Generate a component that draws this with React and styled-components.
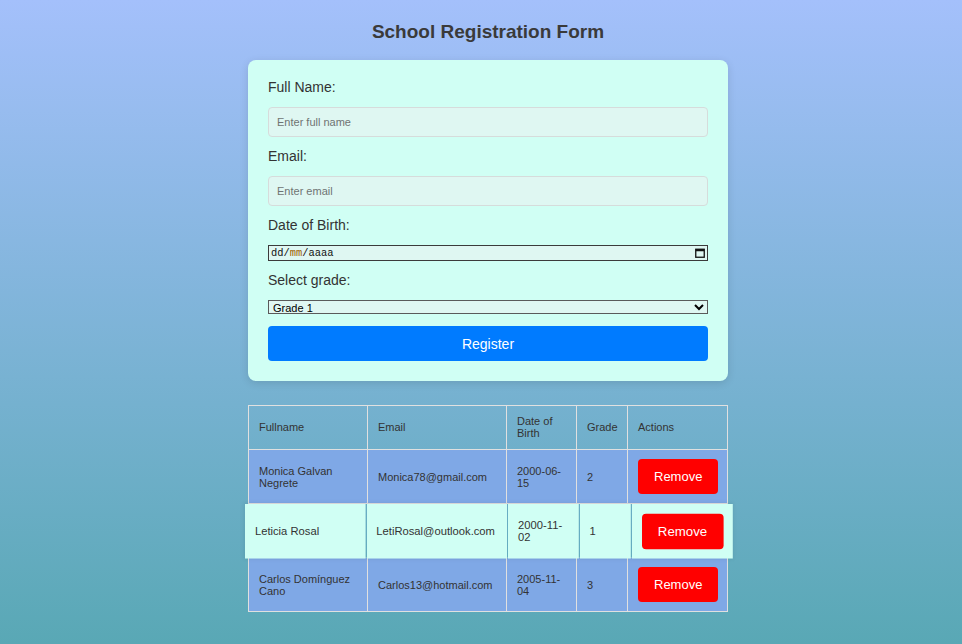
import React from "react";
import styled, { createGlobalStyle } from "styled-components";

const GlobalStyle = createGlobalStyle`
  html, body {
    margin: 0;
    padding: 0;
  }
  body {
    font-family: "Liberation Sans", Arial, sans-serif;
    color: #333;
  }
`;

const Page = styled.div`
  min-height: 100vh;
  box-sizing: border-box;
  background: linear-gradient(to bottom, #a4c0fb, #59a8b5);
  display: flex;
  flex-flow: column nowrap;
  align-items: center;
  padding: 20px 0 20px 14px;
`;

const Title = styled.h2`
  margin: 0 0 16px;
  font-size: 19px;
  line-height: 24px;
  font-weight: bold;
  color: #3a3a3a;
`;

const FormBox = styled.form`
  width: 480px;
  box-sizing: border-box;
  padding: 19px 20px 20px;
  background: #d0fff4;
  border-radius: 8px;
  box-shadow: 0 2px 8px rgba(0, 0, 0, 0.12);
  display: flex;
  flex-flow: column nowrap;
`;

const Label = styled.label`
  display: block;
  font-size: 14px;
  line-height: 17px;
  color: #333;
  margin-bottom: 11px;
`;

const TextInput = styled.input`
  height: 30px;
  box-sizing: border-box;
  padding: 0 8px;
  margin-bottom: 11px;
  border: 1px solid #d6dcdb;
  border-radius: 4px;
  background: #dff7f2;
  font-family: "Liberation Sans", Arial, sans-serif;
  font-size: 11px;
  color: #333;
  outline: none;

  &::placeholder {
    color: #6f7472;
  }
`;

const DateField = styled.div`
  height: 16px;
  box-sizing: border-box;
  margin-bottom: 11px;
  border: 1px solid #3b3b3b;
  background: #dff7f2;
  display: flex;
  align-items: center;
  justify-content: space-between;
  padding: 0 2px;
  font-family: "Liberation Mono", "Courier New", monospace;
  font-size: 10.4px;
  color: #111;
`;

const DatePart = styled.span`
  color: ${(p) => (p.$active ? "#a06000" : "#111")};
`;

const GradeSelect = styled.select`
  height: 14px;
  box-sizing: border-box;
  margin-bottom: 12px;
  border: 1px solid #5a5a5a;
  border-radius: 0;
  background: #dff7f2;
  font-family: "Liberation Sans", Arial, sans-serif;
  font-size: 11px;
  line-height: 12px;
  padding: 0;
  color: #000;
`;

const RegisterButton = styled.button`
  height: 35px;
  border: none;
  border-radius: 4px;
  background: #007bff;
  color: #fff;
  font-family: "Liberation Sans", Arial, sans-serif;
  font-size: 14px;
  cursor: pointer;
`;

const Table = styled.table`
  margin-top: 24px;
  width: 480px;
  table-layout: fixed;
  border-collapse: collapse;
  font-size: 11px;
  line-height: 12px;
  color: #333;
`;

const HeadCell = styled.th`
  box-sizing: border-box;
  border: 1px solid #e0e0e0;
  padding: 10px;
  line-height: 11.5px;
  text-align: left;
  font-weight: normal;
  width: ${(p) => p.$w}px;
`;

const Row = styled.tr`
  background: ${(p) => (p.$hover ? "#d0fff4" : "#7fa8e6")};
  transform: ${(p) => (p.$hover ? "scale(1.02)" : "none")};
  box-shadow: ${(p) => (p.$hover ? "0 0 4px rgba(0,0,0,0.08)" : "none")};
`;

const Cell = styled.td`
  border: 1px solid ${(p) => (p.$hover ? "#86b9c9" : "#e0e0e0")};
  padding: 9px 10px;
  vertical-align: middle;
`;

const RemoveButton = styled.button`
  display: block;
  height: 35px;
  padding: 0 16px;
  border: none;
  border-radius: 4px;
  background: #ff0000;
  color: #fff;
  font-family: "Liberation Sans", Arial, sans-serif;
  font-size: 13px;
  cursor: pointer;
`;

const students = [
  { name: "Monica Galvan Negrete", email: "Monica78@gmail.com", dob: "2000-06-15", grade: 2 },
  { name: "Leticia Rosal", email: "LetiRosal@outlook.com", dob: "2000-11-02", grade: 1, hover: true },
  { name: "Carlos Domínguez Cano", email: "Carlos13@hotmail.com", dob: "2005-11-04", grade: 3 },
];

const CalendarIcon = () => (
  <svg width="10" height="10" viewBox="0 0 10 10">
    <rect x="0.75" y="1.25" width="8.5" height="8" fill="none" stroke="#111" strokeWidth="1.3" />
    <rect x="0.75" y="1.25" width="8.5" height="2" fill="#111" />
  </svg>
);

const App = () => {
  return (
    <Page>
      <GlobalStyle />
      <Title>School Registration Form</Title>
      <FormBox onSubmit={(e) => e.preventDefault()}>
        <Label>Full Name:</Label>
        <TextInput placeholder="Enter full name" />
        <Label>Email:</Label>
        <TextInput placeholder="Enter email" />
        <Label>Date of Birth:</Label>
        <DateField>
          <span>
            <DatePart>dd/</DatePart>
            <DatePart $active>mm</DatePart>
            <DatePart>/aaaa</DatePart>
          </span>
          <CalendarIcon />
        </DateField>
        <Label>Select grade:</Label>
        <GradeSelect defaultValue="1">
          <option value="1">Grade 1</option>
          <option value="2">Grade 2</option>
          <option value="3">Grade 3</option>
        </GradeSelect>
        <RegisterButton type="submit">Register</RegisterButton>
      </FormBox>

      <Table>
        <thead>
          <tr>
            <HeadCell $w={119}>Fullname</HeadCell>
            <HeadCell $w={139}>Email</HeadCell>
            <HeadCell $w={70}>Date of Birth</HeadCell>
            <HeadCell $w={51}>Grade</HeadCell>
            <HeadCell $w={100}>Actions</HeadCell>
          </tr>
        </thead>
        <tbody>
          {students.map((s) => (
            <Row key={s.email} $hover={s.hover}>
              <Cell $hover={s.hover}>{s.name}</Cell>
              <Cell $hover={s.hover}>{s.email}</Cell>
              <Cell $hover={s.hover}>{s.dob}</Cell>
              <Cell $hover={s.hover}>{s.grade}</Cell>
              <Cell $hover={s.hover}>
                <RemoveButton>Remove</RemoveButton>
              </Cell>
            </Row>
          ))}
        </tbody>
      </Table>
    </Page>
  );
};

export default App;
